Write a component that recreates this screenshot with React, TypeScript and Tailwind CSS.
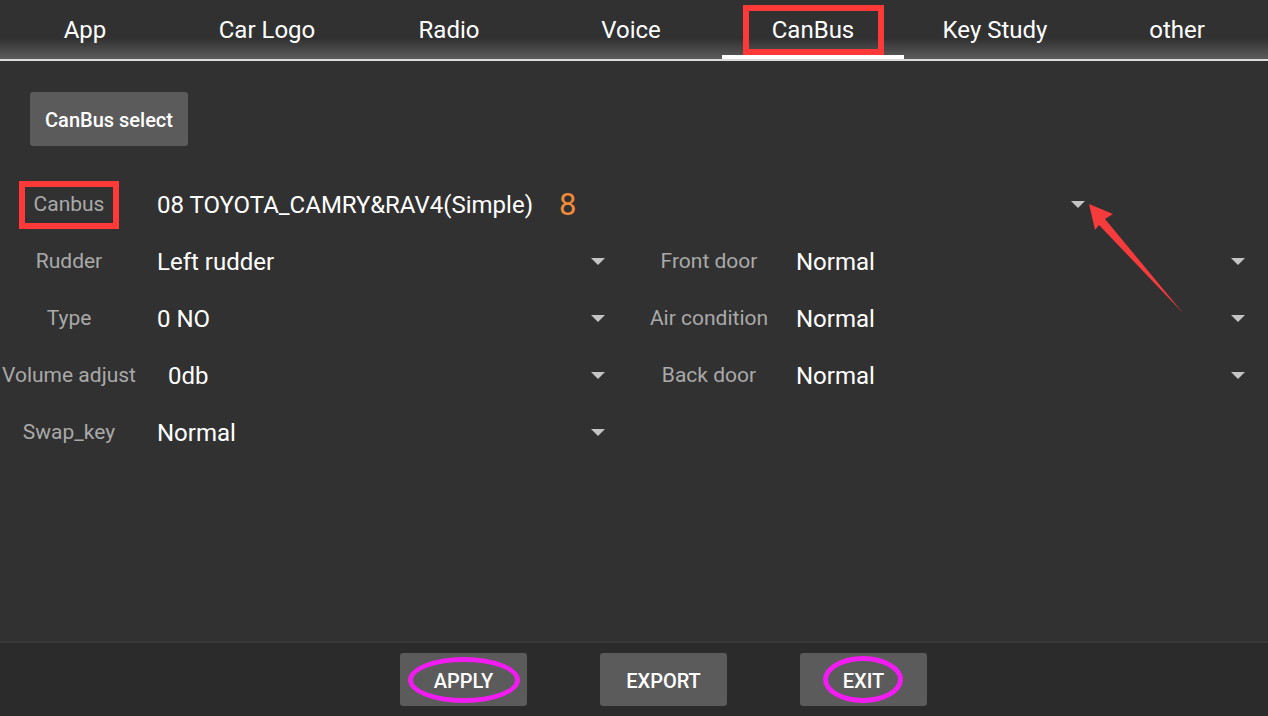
const tabs = ["App", "Car Logo", "Radio", "Voice", "CanBus", "Key Study", "other"];

type Field = { label: string; value: string; shift?: boolean };

const rows: [Field, Field | null][] = [
  [{ label: "Rudder", value: "Left rudder" }, { label: "Front door", value: "Normal" }],
  [{ label: "Type", value: "0 NO" }, { label: "Air condition", value: "Normal" }],
  [{ label: "Volume adjust", value: "0db", shift: true }, { label: "Back door", value: "Normal" }],
  [{ label: "Swap_key", value: "Normal" }, null],
];

function Caret() {
  return <span className="h-0 w-0 border-x-[7px] border-t-[7px] border-x-transparent border-t-[#c4c4c4]" />;
}

function Cell({ field, right }: { field: Field; right?: boolean }) {
  return (
    <div className={`flex items-center ${right ? "flex-1 pr-[23px]" : "w-[640px] pr-[35px]"}`}>
      <div className="w-[138px] whitespace-nowrap text-center text-[21px] text-[#a9a9a9]">{field.label}</div>
      <div
        className={`flex-1 text-[24px] text-white ${right ? "ml-[18px]" : "ml-[19px]"} ${
          field.shift ? "pl-[11px]" : ""
        }`}
      >
        {field.value}
      </div>
      <Caret />
    </div>
  );
}

function ActionButton({ label, ring }: { label: string; ring?: string }) {
  return (
    <button className="relative flex h-[53px] w-[127px] items-center justify-center rounded-[3px] bg-[#5b5b5b] pt-[3px] text-[20px] font-medium text-white">
      {label}
      {ring && <span className={`pointer-events-none absolute rounded-[50%] border-[5px] border-[#f21cf2] ${ring}`} />}
    </button>
  );
}

export default function App() {
  return (
    <div
      className="relative flex h-screen flex-col overflow-hidden bg-[#313131]"
      style={{ fontFamily: "Roboto, 'Liberation Sans', sans-serif" }}
    >
      {/* tab bar */}
      <div className="flex h-[61px] border-b-2 border-[#dcdcdc] bg-linear-to-b from-[#313131] from-65% to-[#5c5c5c]">
        <div className="-ml-[6px] flex">
          {tabs.map((t) => {
            const active = t === "CanBus";
            return (
              <div
                key={t}
                className={`flex w-[182px] items-end justify-center border-b-4 text-[24px] text-white ${
                  active ? "border-white" : "border-transparent"
                }`}
              >
                <span
                  className={`flex h-[50px] items-center justify-center ${
                    active ? "w-[141px] border-[6px] border-[#ff3838]" : ""
                  }`}
                >
                  {t}
                </span>
              </div>
            );
          })}
        </div>
      </div>

      <div className="flex-1">
        <button className="ml-[30px] mt-[31px] flex h-[54px] w-[158px] items-center justify-center rounded-[3px] bg-[#5b5b5b] pt-[2px] text-[20px] font-medium text-white">
          CanBus select
        </button>

        <div className="mt-[30px]">
          {/* canbus row */}
          <div className="flex h-[57px] items-center pr-[183px]">
            <div className="flex w-[138px] justify-center">
              <span className="flex h-[48px] w-[100px] items-center justify-center border-[6px] border-[#ff3838] text-[21px] text-[#a9a9a9]">
                Canbus
              </span>
            </div>
            <span className="ml-[19px] text-[24px] text-white">08 TOYOTA_CAMRY&amp;RAV4(Simple)</span>
            <span className="ml-[26px] text-[31px] leading-none text-[#f28c38]">8</span>
            <span className="flex-1" />
            <Caret />
          </div>

          {rows.map(([l, r], i) => (
            <div key={i} className="flex h-[57px] items-center">
              <Cell field={l} />
              {r && <Cell field={r} right />}
            </div>
          ))}
        </div>
      </div>

      {/* bottom actions */}
      <div className="flex h-[75px] gap-[73px] border-t-2 border-[#383838] bg-[#2b2b2b] pl-[400px] pt-[10px]">
        <ActionButton label="APPLY" ring="left-[8px] top-[4px] h-[46px] w-[112px]" />
        <ActionButton label="EXPORT" />
        <ActionButton label="EXIT" ring="left-[23px] top-[3px] h-[47px] w-[80px]" />
      </div>

      {/* annotation arrow */}
      <svg className="pointer-events-none absolute left-0 top-0 h-full w-full" viewBox="0 0 1268 716">
        <polygon points="1089,204 1113,214 1105,219 1183,313 1099,225 1095,230" fill="#f53b3b" />
      </svg>
    </div>
  );
}
